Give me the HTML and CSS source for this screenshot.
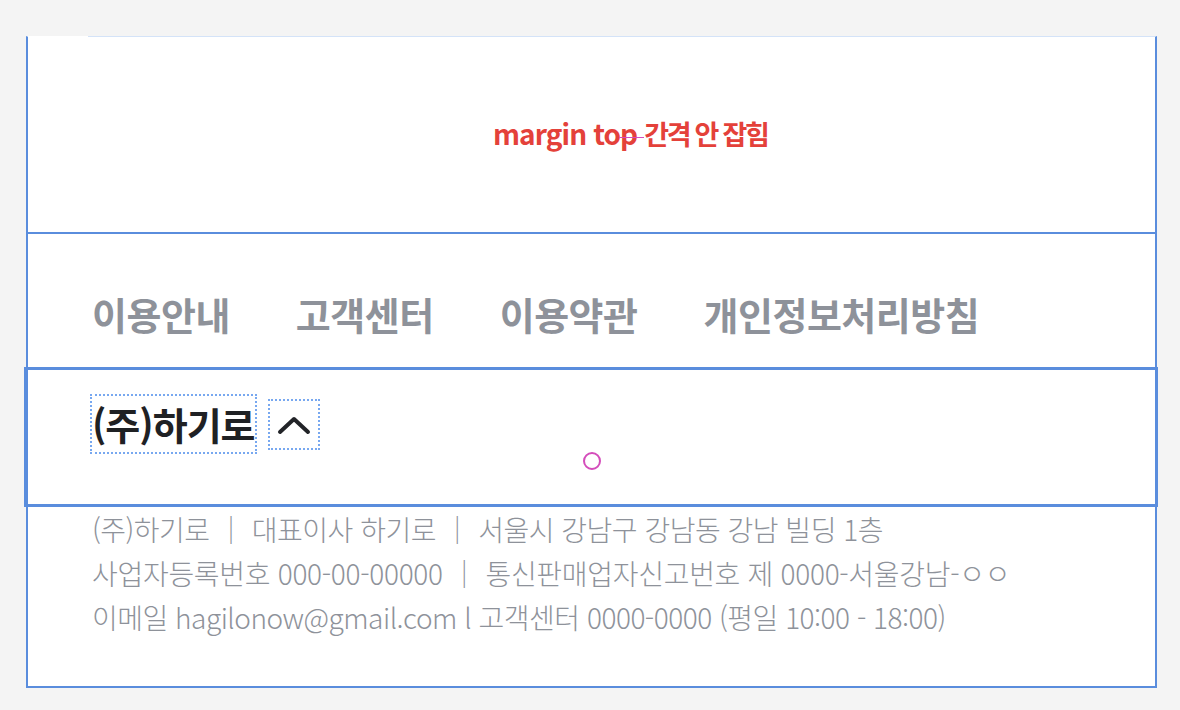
FILE: index.html
```html
<!DOCTYPE html>
<html lang="ko">
<head>
<meta charset="UTF-8" />
<meta name="viewport" content="width=device-width, initial-scale=1" />
<title>하기로 - 푸터</title>
<link rel="stylesheet" href="styles.css">
</head>
<body>
  <div class="page">
    <!-- 메모 영역 -->
    <section class="memo">
      <p class="memo-text"><span class="memo-en">margin top</span><span class="memo-mark"></span>간격 안 잡힘</p>
    </section>

    <!-- 푸터 링크 -->
    <nav class="links">
      <a href="#">이용안내</a>
      <a href="#">고객센터</a>
      <a href="#">이용약관</a>
      <a href="#">개인정보처리방침</a>
    </nav>

    <!-- 회사명 + 토글 -->
    <div class="company">
      <h2 class="company-name">(주)하기로</h2>
      <button class="toggle" type="button" aria-label="접기">
        <svg width="34" height="20" viewBox="0 0 34 20">
          <polyline points="3,17 17,4 31,17" fill="none" stroke="#222428" stroke-width="4" stroke-linecap="round" stroke-linejoin="round" />
        </svg>
      </button>
      <span class="pointer"></span>
    </div>

    <!-- 사업자 정보 -->
    <div class="info">
      <p>(주)하기로 ｜ 대표이사 하기로 ｜ 서울시 강남구 강남동 강남 빌딩 1층</p>
      <p class="wide">사업자등록번호 000-00-00000 ｜ 통신판매업자신고번호 제 0000-서울강남-ㅇㅇ</p>
      <p>이메일 hagilonow@gmail.com l 고객센터 0000-0000 (평일 10:00 - 18:00)</p>
    </div>
  </div>
</body>
</html>
```

FILE: styles.css
```css
:root {
  --blue: #5a8ddd;
  --blue-light: #d4e3f8;
  --dot: #78a8f0;
  --gray: #8e929a;
  --dark: #1f2124;
  --red: #e4413a;
  --bg: #f4f4f4;
}
body {
  margin: 0;
  background-color: var(--bg);
  font-family: "Noto Sans CJK KR", "Noto Sans", sans-serif;
}
.page {
  position: relative;
  box-sizing: border-box;
  width: 1131px;
  height: 652px;
  margin: 36px 0 0 26px;
  background-color: #fff;
  border-top: 1px solid var(--blue-light);
  border-left: 2px solid var(--blue);
  border-right: 2px solid var(--blue);
  border-bottom: 2px solid var(--blue);
}
.page::before {
  content: "";
  position: absolute;
  top: -1px;
  left: 0;
  width: 60px;
  height: 1px;
  background-color: #fff;
}

/* 메모 */
.memo {
  box-sizing: border-box;
  height: 197px;
  padding: 78px 0 0 465px;
  border-bottom: 2px solid var(--blue);
}
.memo-text {
  margin: 0;
  font-size: 27px;
  line-height: 36px;
  font-weight: 700;
  letter-spacing: -2.3px;
  color: var(--red);
}
.memo-en {
  font-size: 28px;
  letter-spacing: -0.9px;
}
.memo-mark {
  display: inline-block;
  width: 7px;
  height: 1px;
  margin-left: -18px;
  padding-left: 18px;
  vertical-align: middle;
  background-color: #d44dbb;
}

/* 링크 */
.links {
  box-sizing: border-box;
  height: 133px;
  padding: 60px 0 0 64px;
  display: flex;
  gap: 66px;
}
.links a {
  font-size: 38px;
  line-height: 40px;
  font-weight: 700;
  letter-spacing: -0.5px;
  color: var(--gray);
  text-decoration: none;
}

/* 회사명 */
.company {
  position: relative;
  box-sizing: border-box;
  height: 140px;
  margin: 0 -3px 0 -4px;
  padding: 24px 0 0 63px;
  border: 3px solid var(--blue);
  display: flex;
  align-items: flex-start;
  gap: 11px;
}
.company-name {
  margin: 0;
  height: 56px;
  border: 2px dotted var(--dot);
  font-size: 38px;
  line-height: 56px;
  font-weight: 700;
  letter-spacing: -1px;
  color: var(--dark);
}
.toggle {
  box-sizing: border-box;
  width: 52px;
  height: 51px;
  margin-top: 5px;
  padding: 0;
  border: 2px dotted var(--dot);
  background: none;
  display: flex;
  justify-content: center;
  align-items: center;
  cursor: pointer;
}
.pointer {
  position: absolute;
  left: 556px;
  top: 82px;
  box-sizing: border-box;
  width: 18px;
  height: 18px;
  border: 2px solid #d44dbb;
  border-radius: 50%;
}

/* 사업자 정보 */
.info {
  padding: 0 0 0 64px;
}
.info p {
  margin: 0;
  font-size: 28px;
  line-height: 44px;
  font-weight: 300;
  letter-spacing: -0.5px;
  color: var(--gray);
}
.info p.wide {
  letter-spacing: -0.3px;
}
```
